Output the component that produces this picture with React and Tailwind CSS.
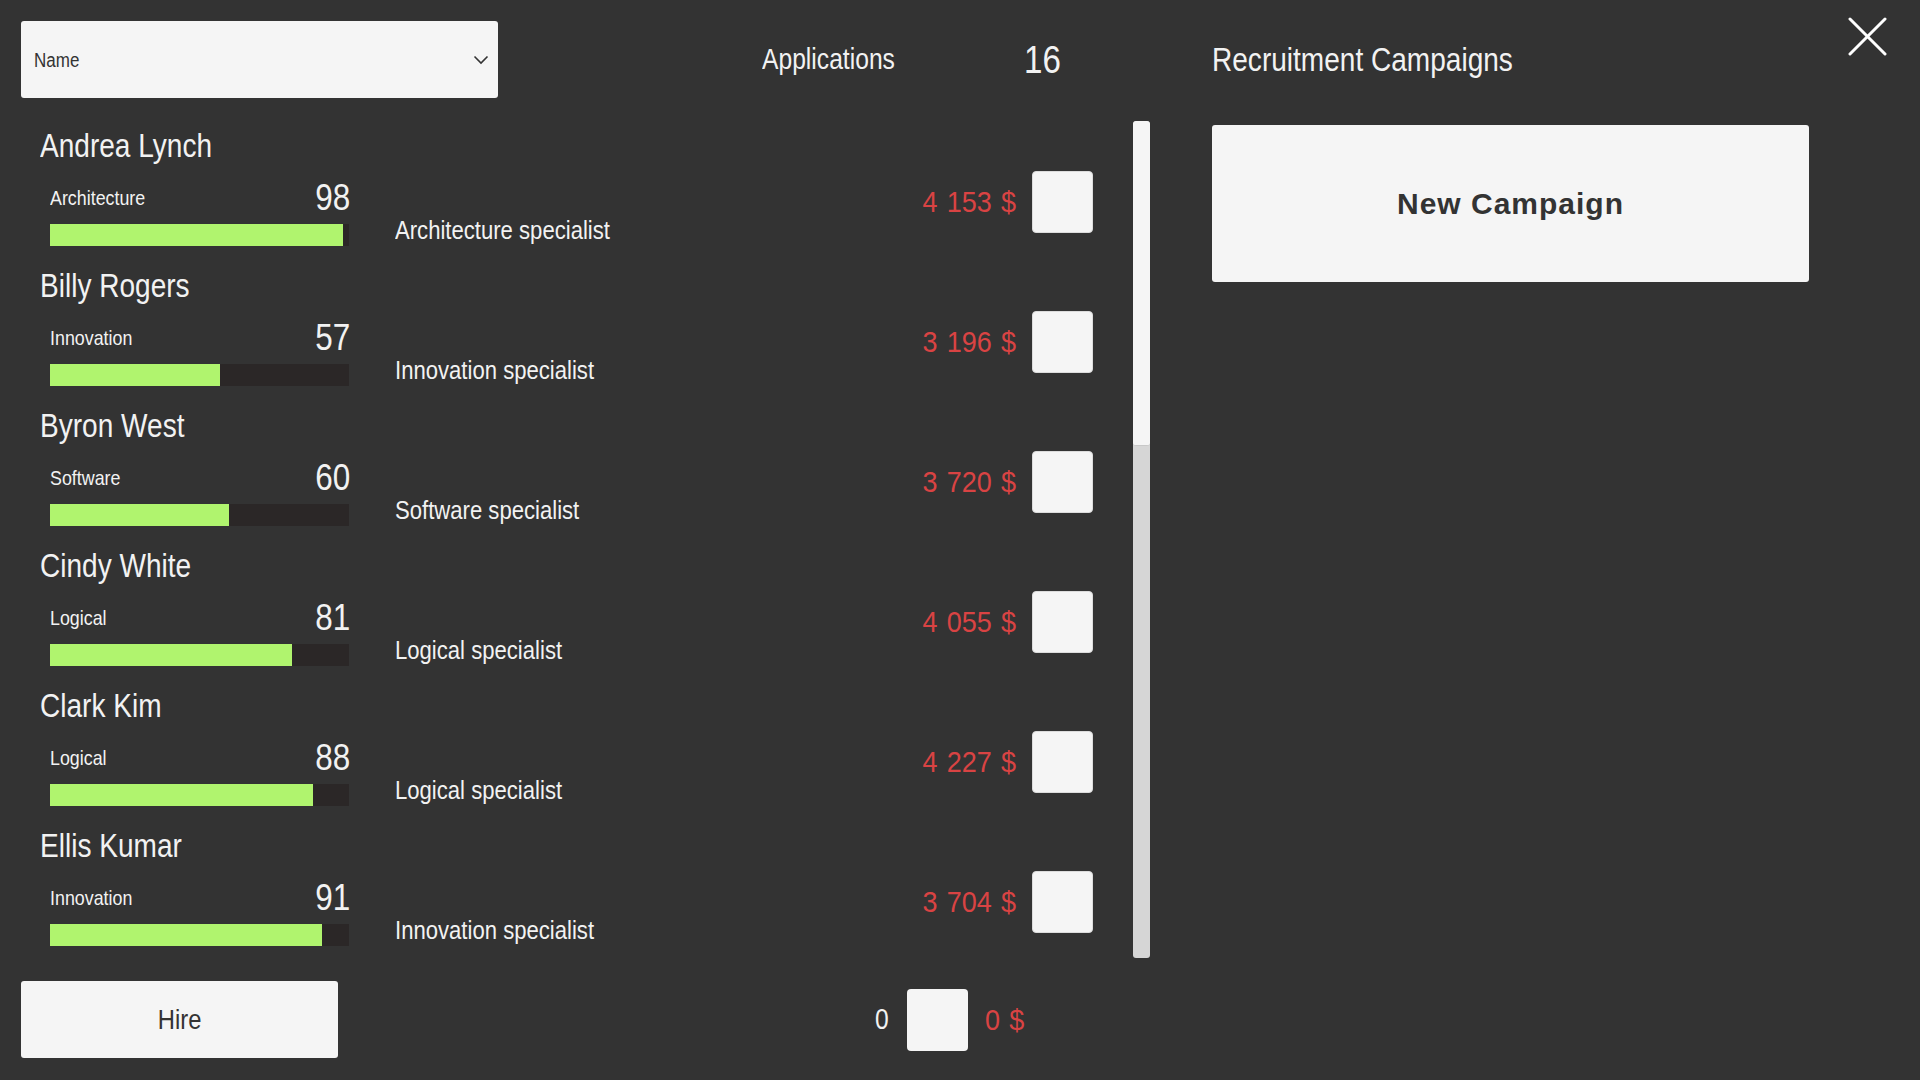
import { useState } from 'react'

const applicants = [
  { name: 'Andrea Lynch', skill: 'Architecture', score: 98, salary: '4 153 $' },
  { name: 'Billy Rogers', skill: 'Innovation', score: 57, salary: '3 196 $' },
  { name: 'Byron West', skill: 'Software', score: 60, salary: '3 720 $' },
  { name: 'Cindy White', skill: 'Logical', score: 81, salary: '4 055 $' },
  { name: 'Clark Kim', skill: 'Logical', score: 88, salary: '4 227 $' },
  { name: 'Ellis Kumar', skill: 'Innovation', score: 91, salary: '3 704 $' },
]

// the game font is a condensed sans, squeeze Liberation Sans to get the same widths
function Narrow({ className = '', children }) {
  return <span className={`inline-block whitespace-nowrap leading-none scale-x-[0.85] ${className}`}>{children}</span>
}

function ApplicantRow({ applicant, checked, onToggle }) {
  return (
    <div className="h-[140px] flex shrink-0">
      <div className="w-[310px]">
        <div className="h-[48px] flex items-center">
          <Narrow className="origin-left text-[33px]">{applicant.name}</Narrow>
        </div>
        <div className="pl-[10px]">
          <div className="mt-[8px] h-[40px] flex items-center justify-between">
            <Narrow className="origin-left text-[21px]">{applicant.skill}</Narrow>
            <Narrow className="origin-right text-[37px]">{applicant.score}</Narrow>
          </div>
          <div className="mt-[7px] h-[22px] w-[299px] bg-[#2b2727]">
            <div className="h-full bg-[#b0f46e]" style={{ width: `${applicant.score}%` }} />
          </div>
        </div>
      </div>
      <div className="ml-[45px] mt-[95px] h-[28px] flex items-center">
        <Narrow className="origin-left text-[26px]">{applicant.skill} specialist</Narrow>
      </div>
      <div className="ml-auto mt-[50px] h-[62px] flex items-center gap-[16px]">
        <span className="inline-block whitespace-nowrap leading-none origin-right scale-x-[0.9] text-[30px] text-[#d94343] [word-spacing:2px]">
          {applicant.salary}
        </span>
        <button
          onClick={onToggle}
          className="w-[61px] h-[62px] rounded-[4px] bg-[#f5f5f5] border border-[#dcdcdc] flex items-center justify-center"
        >
          {checked && <span className="text-[#333] text-[30px]">✓</span>}
        </button>
      </div>
    </div>
  )
}

export default function App() {
  const [selected, setSelected] = useState({})

  const toggle = (name) => setSelected((s) => ({ ...s, [name]: !s[name] }))
  const count = Object.values(selected).filter(Boolean).length

  return (
    <div className="relative w-[1920px] h-[1080px] overflow-hidden bg-[#333333] text-[#f2f2f2] font-['Liberation_Sans',sans-serif] flex">
      {/* applications */}
      <div className="w-[1150px] pl-[21px] pt-[21px] flex flex-col">
        <div className="h-[77px] flex items-center">
          <div className="w-[477px] h-[77px] rounded-[3px] bg-[#f5f5f5] flex items-center justify-between pl-[13px] pr-[9px]">
            <Narrow className="origin-left text-[20px] text-[#333333]">Name</Narrow>
            <svg width="16" height="10" viewBox="0 0 16 10" fill="none" stroke="#333333" strokeWidth="1.6">
              <polyline points="1.5,1.5 8,8 14.5,1.5" />
            </svg>
          </div>
          <Narrow className="ml-[264px] origin-left text-[29px]">Applications</Narrow>
          <Narrow className="ml-[106px] origin-left text-[39px]">16</Narrow>
        </div>

        <div className="mt-[23px] pl-[19px] flex">
          <div className="w-[1053px] h-[837px] overflow-hidden flex flex-col">
            {applicants.map((a) => (
              <ApplicantRow key={a.name} applicant={a} checked={!!selected[a.name]} onToggle={() => toggle(a.name)} />
            ))}
          </div>
          <div className="ml-[40px] w-[17px] h-[837px] rounded-[3px] bg-[#d6d6d6] overflow-hidden">
            <div className="h-[325px] rounded-[3px] bg-[#f5f5f5] border-b border-[#c8c8c8]" />
          </div>
        </div>

        <div className="mt-[23px] h-[77px] flex items-center">
          <button className="w-[317px] h-[77px] rounded-[3px] bg-[#f5f5f5] text-[#333333] flex items-center justify-center">
            <Narrow className="origin-center text-[28px]">Hire</Narrow>
          </button>
          <Narrow className="ml-[537px] origin-left text-[29px]">{count}</Narrow>
          <div className="ml-[16px] w-[61px] h-[62px] rounded-[4px] bg-[#f5f5f5]" />
          <span className="ml-[17px] inline-block whitespace-nowrap leading-none origin-left scale-x-[0.9] text-[30px] text-[#d94343] [word-spacing:2px]">
            0 $
          </span>
        </div>
      </div>

      {/* campaigns */}
      <div className="ml-[62px] pt-[21px] flex flex-col">
        <div className="h-[77px] flex items-center">
          <Narrow className="origin-left text-[33px]">Recruitment Campaigns</Narrow>
        </div>
        <button className="mt-[27px] w-[597px] h-[157px] rounded-[3px] bg-[#f5f5f5] text-[#333333] text-[30px] font-bold tracking-[1px]">
          New Campaign
        </button>
      </div>

      <button className="absolute top-[17px] right-[33px] w-[39px] h-[39px]">
        <svg width="39" height="39" viewBox="0 0 39 39" stroke="#ffffff" strokeWidth="3" strokeLinecap="round">
          <line x1="2" y1="2" x2="37" y2="37" />
          <line x1="37" y1="2" x2="2" y2="37" />
        </svg>
      </button>
    </div>
  )
}
